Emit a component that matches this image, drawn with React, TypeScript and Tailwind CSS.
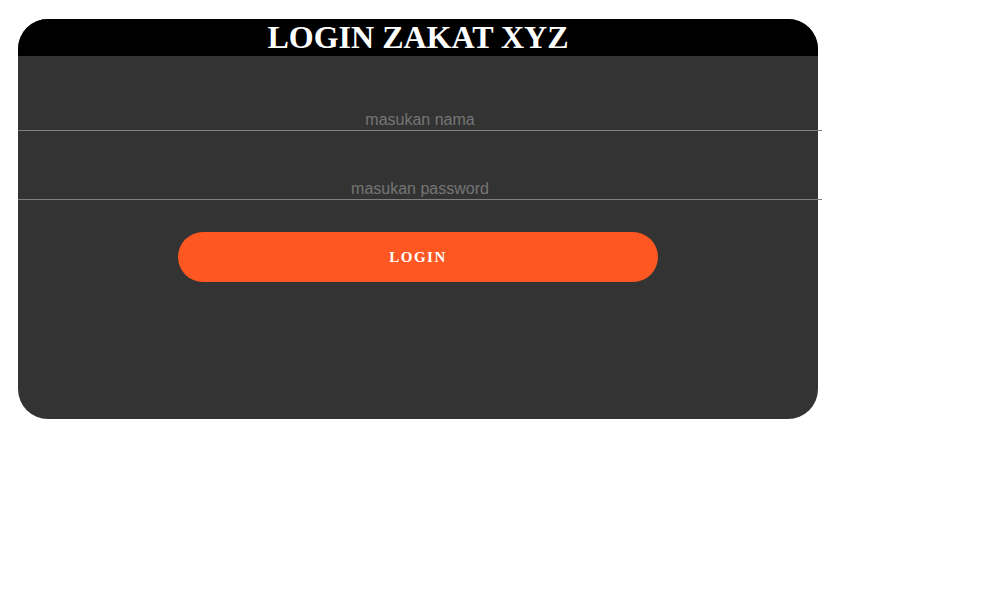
import React from 'react';

const App = () => {
  return (
    <main className="min-h-[605px] bg-white pt-[19px] pl-[18px]">
      <div className="w-[800px] h-[400px] rounded-[30px] bg-[#333333]">
        <h1 className="rounded-t-[30px] bg-black text-center text-[32px] font-bold leading-[37px] text-white font-['Liberation_Serif',serif]">
          LOGIN ZAKAT XYZ
        </h1>

        <form className="flex flex-col pt-[53px]" onSubmit={(e) => e.preventDefault()}>
          <input
            type="text"
            autoFocus
            placeholder="masukan nama"
            className="h-[22px] w-[804px] border-b border-[#808080] bg-transparent text-center text-[16px] leading-[18px] text-white outline-none placeholder:text-[#757575] font-['Liberation_Sans',sans-serif]"
          />
          <input
            type="password"
            placeholder="masukan password"
            className="mt-[47px] h-[22px] w-[804px] border-b border-[#808080] bg-transparent text-center text-[16px] leading-[18px] text-white outline-none placeholder:text-[#757575] font-['Liberation_Sans',sans-serif]"
          />
          <div className="flex justify-center pt-[32px]">
            <button
              type="submit"
              className="h-[50px] w-[480px] rounded-full bg-[#ff5722] text-[15px] font-bold tracking-[1.5px] text-white font-['Liberation_Serif',serif]"
            >
              LOGIN
            </button>
          </div>
        </form>
      </div>
    </main>
  );
};

export default App;
